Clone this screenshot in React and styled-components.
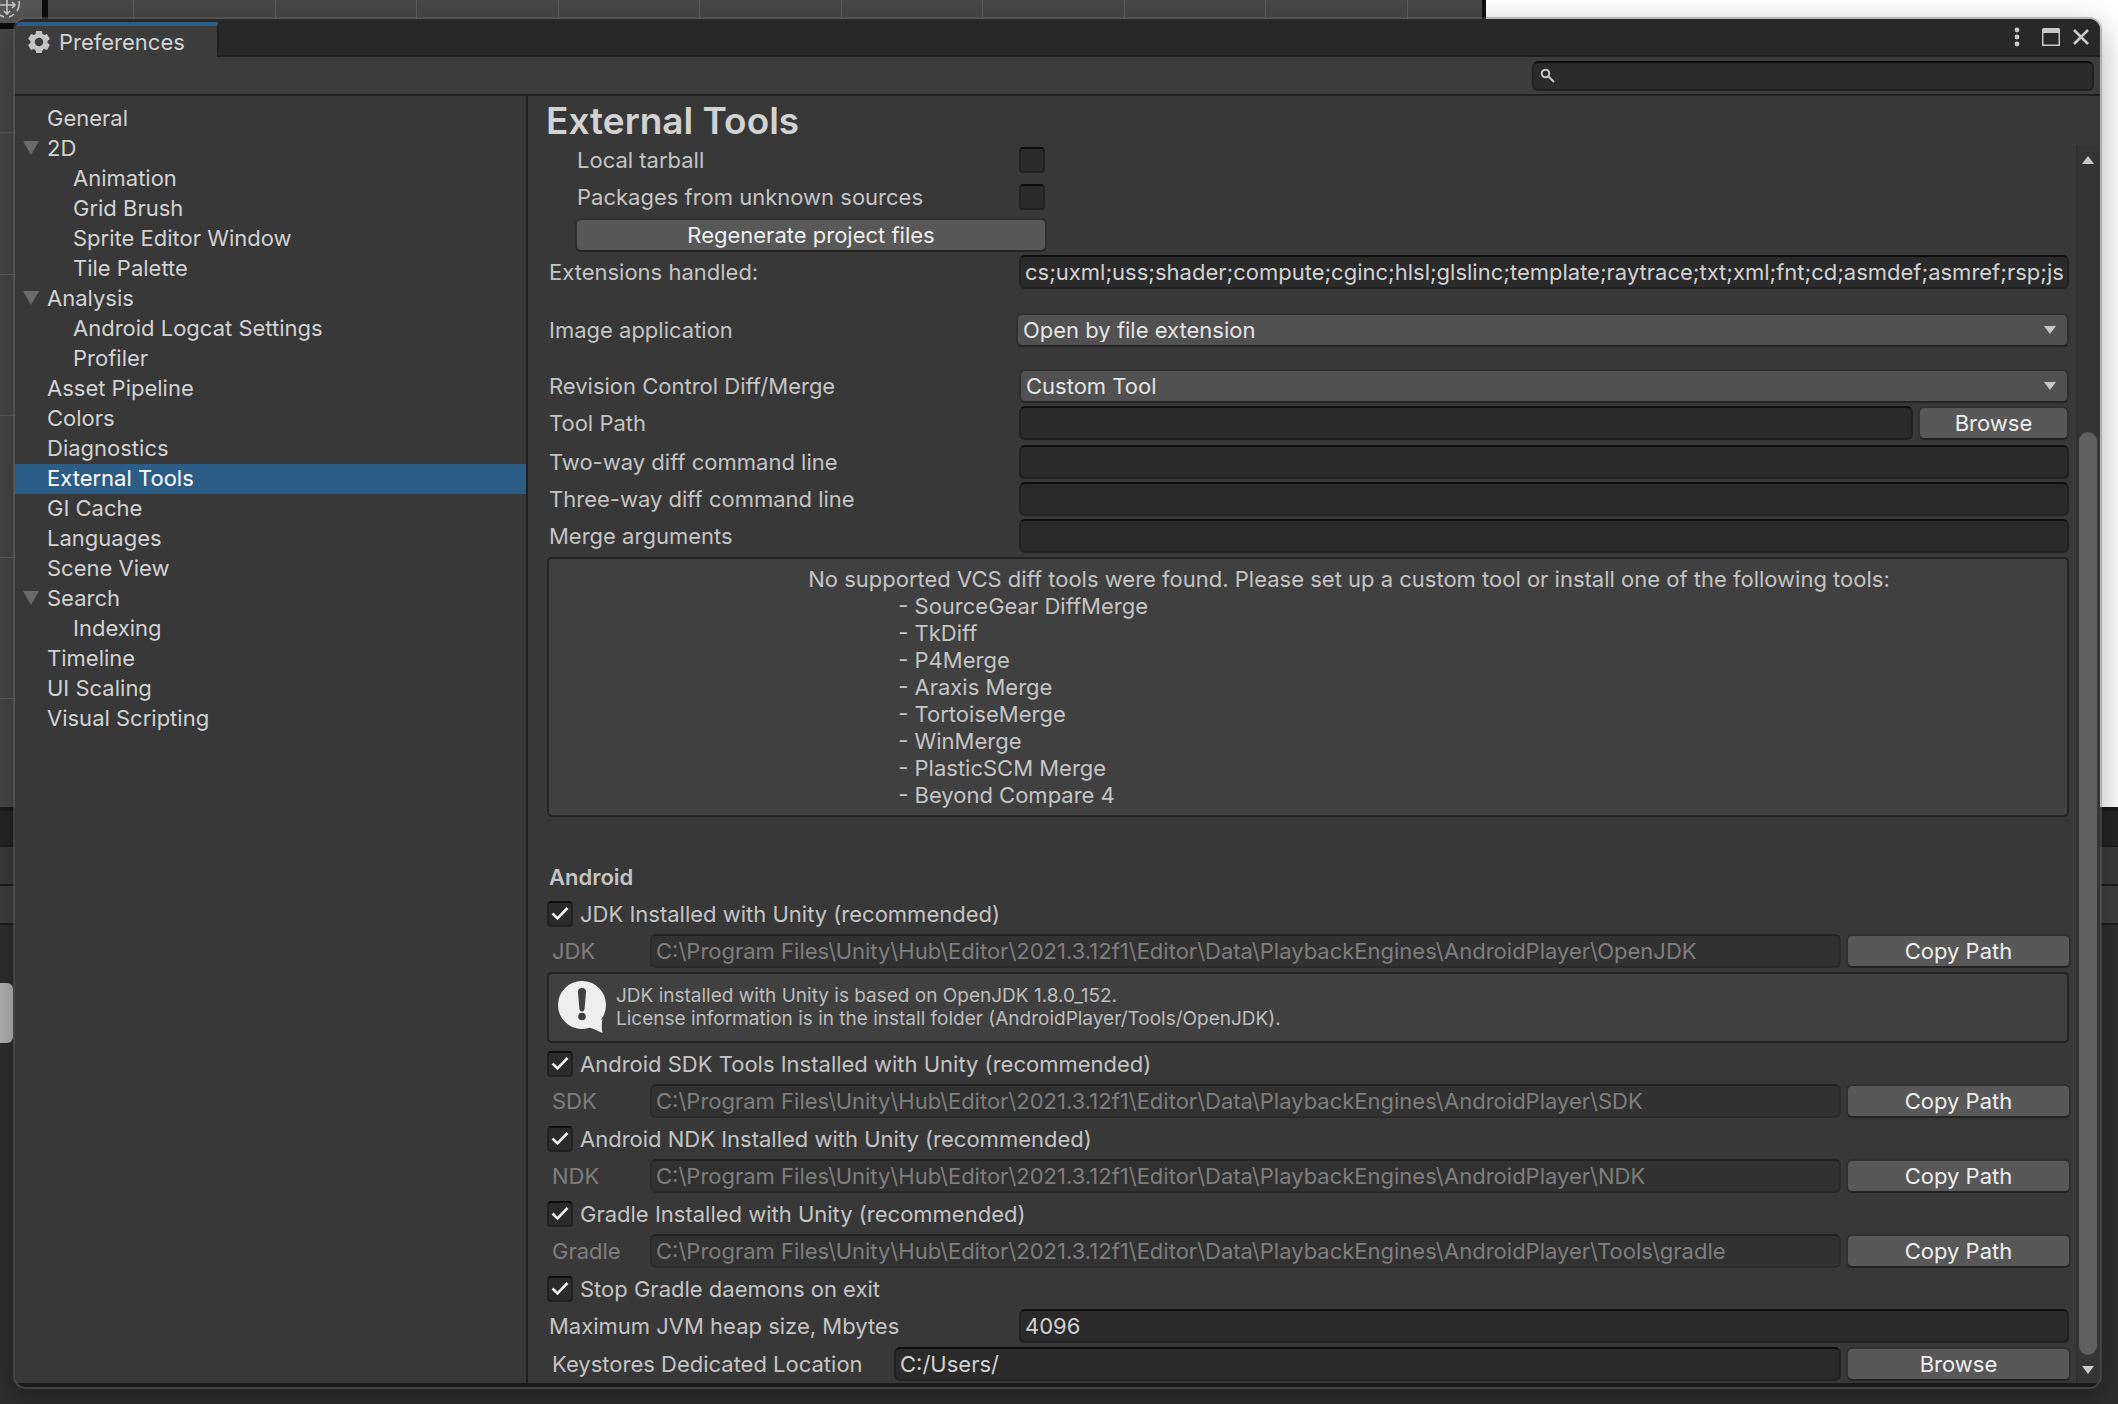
import React from "react";
import styled, { createGlobalStyle, css } from "styled-components";

const GlobalStyle = createGlobalStyle`
  *, *::before, *::after { box-sizing: border-box; }
  body {
    margin: 0;
    background: #2e2e2e;
    color: #c4c4c4;
    font: 400 22px/30px Inter, "Liberation Sans", sans-serif;
  }
  input, button, select { font: inherit; color: inherit; margin: 0; }
`;

/* ---------- editor behind the window ---------- */

const Desktop = styled.div`
  display: grid;
  min-height: 100vh;
  overflow: hidden;
`;

const Backdrop = styled.div`
  grid-area: 1 / 1;
  display: flex;
  flex-direction: column;
  background: #2e2e2e;
`;

const Scene = styled.div`
  display: flex;
  height: 807px;
`;

const Canvas = styled.div`
  flex: 0 1 1486px;
  border-right: 4px solid #111111;
  background-color: #474747;
  background-image:
    linear-gradient(90deg, #5c5c5c 1px, transparent 1px 142px, #5c5c5c 142px 143px, transparent 143px),
    linear-gradient(#5c5c5c 1px, transparent 1px 142px, #5c5c5c 142px 143px, transparent 143px);
  background-size: 283px 283px;
  background-position: 133px 132px;
`;

const GizmoBox = styled.div`
  width: 48px;
  height: 29px;
  border: solid #0d0d0d;
  border-width: 0 6px 6px 0;
  background: #565656;
  svg { display: block; }
`;

const GamePage = styled.div`
  flex: 1;
  background: #ffffff;
`;

const Bar = styled.div`
  height: ${(p) => p.$height}px;
  background: ${(p) => p.$color};
  border-bottom: 2px solid #1c1c1c;
`;

const Knob = styled.div`
  width: 13px;
  height: 60px;
  margin-top: 58px;
  border-radius: 0 6px 6px 0;
  background: #b4b4b4;
`;

/* ---------- window chrome ---------- */

const Window = styled.main`
  grid-area: 1 / 1;
  z-index: 1;
  display: flex;
  flex-direction: column;
  margin: 17px 16px 15px 13px;
  border: 2px solid rgba(102, 102, 102, 0.43);
  border-bottom-color: #434343;
  border-radius: 13px;
  background: #383838;
  background-clip: padding-box;
  box-shadow: 0 10px 32px rgba(0, 0, 0, 0.3);
  overflow: hidden;
`;

const TitleBar = styled.header`
  display: flex;
  align-items: stretch;
  height: 38px;
  background: #282828;
`;

const Tab = styled.h1`
  display: flex;
  align-items: center;
  gap: 9px;
  width: 204px;
  margin: 3px 0 0;
  padding-left: 13px;
  border-top: 4px solid #2c5d87;
  border-right: 2px solid #1f1f1f;
  border-radius: 6px 3px 0 0;
  background: #3c3c3c;
  color: #d2d2d2;
  font-size: 22px;
  font-weight: 400;
`;

const WindowButtons = styled.div`
  flex: 1;
  display: flex;
  justify-content: flex-end;
  align-items: center;
  gap: 12px;
  padding-right: 10px;
  border-bottom: 2px solid #202020;
`;

const IconButton = styled.button`
  display: flex;
  padding: 0;
  border: 0;
  background: none;
  color: #c8c8c8;
`;

const Toolbar = styled.div`
  display: flex;
  justify-content: flex-end;
  align-items: center;
  height: 39px;
  padding-right: 6px;
  border-bottom: 2px solid #202020;
  background: #3c3c3c;
`;

const SearchBox = styled.label`
  display: flex;
  align-items: center;
  width: 562px;
  height: 30px;
  padding-left: 6px;
  border: 2px solid #212121;
  border-top-color: #0d0d0d;
  border-radius: 6px;
  background: #2a2a2a;
  input {
    flex: 1;
    min-width: 0;
    height: 24px;
    border: 0;
    outline: 0;
    background: none;
  }
`;

const Body = styled.div`
  flex: 1;
  display: flex;
  border-bottom: 4px solid #191919;
`;

/* ---------- category tree ---------- */

const Sidebar = styled.nav`
  flex: 0 0 513px;
  padding-top: 8px;
  border-right: 2px solid #202020;
`;

const Tree = styled.ul`
  margin: 0;
  padding: 0;
  list-style: none;
`;

const TreeLink = styled.a`
  display: flex;
  align-items: center;
  height: 30px;
  padding: 0 0 2px ${(p) => (p.$child ? 58 : 8)}px;
  color: ${(p) => (p.$selected ? "#ffffff" : "#d2d2d2")};
  background: ${(p) => (p.$selected ? "#2c5d87" : "transparent")};
  text-decoration: none;
`;

const Fold = styled.svg`
  width: 16px;
  height: 14px;
  margin-right: 8px;
  fill: ${(p) => (p.$open ? "#6a6a6a" : "none")};
`;

/* ---------- settings panel ---------- */

const Panel = styled.section`
  flex: 1;
  min-width: 0;
  display: flex;
  flex-direction: column;
`;

const PanelTitle = styled.h2`
  margin: 0;
  padding: 3px 0 0 18px;
  color: #d2d2d2;
  font-size: 37px;
  font-weight: 600;
  line-height: 44px;
`;

const ScrollArea = styled.div`
  flex: 1;
  display: flex;
`;

const Settings = styled.div`
  flex: 1;
  min-width: 0;
  display: flex;
  flex-direction: column;
  gap: 4px;
  padding: 0 7px 2px 19px;
`;

const Group = styled.div`
  display: flex;
  flex-direction: column;
  gap: 3px;
  margin-top: ${(p) => p.$above || 0}px;
`;

const Row = styled.div`
  display: flex;
  align-items: center;
  height: 34px;
  padding-left: ${(p) => (p.$indent ? 28 : 0)}px;
`;

const PathRow = styled(Row)`
  gap: 5px;
  margin-right: -2px;
`;

const Label = styled.label`
  flex: 0 0 ${(p) => p.$width}px;
  padding-left: ${(p) => p.$inset || 2}px;
  color: ${(p) => (p.$dim ? "#7e7e7e" : "#c4c4c4")};
  white-space: nowrap;
`;

const fieldFrame = css`
  height: 34px;
  border: 2px solid #212121;
  border-radius: 6px;
`;

const TextField = styled.input`
  ${fieldFrame}
  flex: 1;
  min-width: 0;
  padding: 0 4px;
  border-top-color: #0d0d0d;
  outline: 0;
  background: #2a2a2a;
  color: #d2d2d2;
  &:disabled {
    border-color: #2a2a2a;
    border-top-color: #222222;
    background: #313131;
    color: #7e7e7e;
  }
`;

const Button = styled.button`
  ${fieldFrame}
  flex: 0 0 ${(p) => p.$width}px;
  padding: 0;
  border-color: #303030;
  border-bottom-color: #242424;
  background: #585858;
  background-clip: padding-box;
  color: #eeeeee;
`;

const SelectWrap = styled.span`
  flex: 1;
  min-width: 0;
  display: grid;
  align-items: center;
  svg {
    grid-area: 1 / 1;
    justify-self: end;
    margin-right: 13px;
    pointer-events: none;
  }
`;

const SelectBox = styled.select`
  ${fieldFrame}
  grid-area: 1 / 1;
  width: 100%;
  padding: 0 30px 3px 5px;
  border-color: #303030;
  border-bottom-color: #242424;
  appearance: none;
  background: #515151;
  background-clip: padding-box;
  color: #e4e4e4;
`;

const CheckWrap = styled.span`
  display: grid;
  place-items: center;
  svg {
    grid-area: 1 / 1;
    pointer-events: none;
  }
`;

const CheckInput = styled.input`
  grid-area: 1 / 1;
  width: 26px;
  height: 26px;
  border: 2px solid #212121;
  border-top-color: #0d0d0d;
  border-radius: 4px;
  appearance: none;
  background: #2a2a2a;
`;

const CheckLabel = styled.label`
  padding-left: 7px;
`;

const NoticeBox = styled.div`
  display: flex;
  justify-content: center;
  padding: 7px 0 6px 82px;
  border: 2px solid #232323;
  border-radius: 5px;
  background: #404040;
  line-height: 27px;
  p, ul { margin: 0; }
  ul {
    padding: 0 0 0 90px;
    list-style: none;
  }
`;

const InfoBox = styled.div`
  display: flex;
  align-items: center;
  gap: 10px;
  height: 71px;
  padding: 0 9px 2px;
  border: 2px solid #232323;
  border-radius: 5px;
  background: #404040;
  color: #bdbdbd;
  font-size: 19px;
  line-height: 23px;
  p { margin: 0; }
`;

const SectionTitle = styled.h3`
  margin: 0;
  padding-left: 2px;
  font-size: 22px;
  font-weight: 600;
  line-height: 34px;
`;

const ScrollBar = styled.div`
  display: flex;
  flex-direction: column;
  align-items: center;
  width: 24px;
  margin-top: 2px;
  padding: 11px 2px 9px 0;
  border-left: 2px solid #303030;
  background: #353535;
`;

const Thumb = styled.div`
  flex: 1;
  width: 18px;
  margin: 268px 0 11px;
  border-radius: 9px;
  background: #5f5f5f;
`;

/* ---------- drawings ---------- */

const GizmoIcon = () => (
  <svg width="24" height="22" viewBox="0 0 24 22" fill="none" stroke="#c4c4c4" strokeWidth="1.6">
    <path d="M7 0v14M0 5h15M4 11l3 3 3-3M12 2l3 3-3 3" />
    <path d="M19 1a13 13 0 0 1-2 10M14 14a13 13 0 0 1-5 3M4 17a13 13 0 0 1-4-2" />
  </svg>
);

const GearIcon = () => (
  <svg width="22" height="22" viewBox="0 0 22 22">
    <path
      fill="#c4c4c4"
      fillRule="evenodd"
      d="M8.2 0h5.600l.7 3.100 1.500.9L19 3l2.900 5-2.300 2.100v1.800l2.300 2.100-2.900 5-3-1-1.500.9-.7 3.100H8.200l-.7-3.100L6 18l-3 1-2.900-5 2.300-2.100v-1.800L.1 8 3 3l3 1 1.500-.9zM11 6.800a4.200 4.200 0 1 0 0 8.400 4.200 4.200 0 0 0 0-8.400z"
    />
  </svg>
);

const KebabIcon = () => (
  <svg width="26" height="20" viewBox="0 0 26 20" fill="currentColor">
    <circle cx="13" cy="3" r="2.400" />
    <circle cx="13" cy="10" r="2.400" />
    <circle cx="13" cy="17" r="2.400" />
  </svg>
);

const MaximizeIcon = () => (
  <svg width="18" height="18" viewBox="0 0 18 18" fill="currentColor">
    <path fillRule="evenodd" d="M1 0h16l1 1v17H0V1zM1.500 5v11.500h15V5z" />
  </svg>
);

const CloseIcon = () => (
  <svg width="18" height="18" viewBox="0 0 18 18" fill="none" stroke="currentColor" strokeWidth="2.600">
    <path d="M2 2l14 14M16 2L2 16" />
  </svg>
);

const SearchIcon = () => (
  <svg width="15" height="15" viewBox="0 0 15 15" fill="none" stroke="#c4c4c4" strokeWidth="2">
    <circle cx="5.500" cy="5.500" r="3.800" />
    <path d="M8.300 8.300L14 14" />
  </svg>
);

const CheckIcon = () => (
  <svg width="18" height="16" viewBox="0 0 18 16" fill="none" stroke="#eeeeee" strokeWidth="2.600">
    <path d="M1.500 7.500l5 5L16.500 2" />
  </svg>
);

const DownIcon = () => (
  <svg width="12" height="8" viewBox="0 0 12 8" fill="#c8c8c8">
    <path d="M0 0h12L6 8z" />
  </svg>
);

const UpIcon = () => (
  <svg width="12" height="8" viewBox="0 0 12 8" fill="#c8c8c8">
    <path d="M0 8h12L6 0z" />
  </svg>
);

const InfoIcon = () => (
  <svg width="48" height="52" viewBox="0 0 48 52">
    <circle cx="24" cy="24" r="24" fill="#eeeeee" />
    <path fill="#eeeeee" d="M30 46c5 1.500 10 4 14.500 6-.8-4-1-10 0-14z" />
    <path fill="#404040" d="M24 7c2.800 0 4.200 1.500 4 4.500L26.600 27.500c-.2 2-1 3-2.600 3s-2.400-1-2.600-3L20 11.500C19.800 8.500 21.200 7 24 7z" />
    <circle cx="24" cy="35.500" r="3.800" fill="#404040" />
  </svg>
);

/* ---------- data ---------- */

const categories = [
  { name: "General" },
  { name: "2D", children: ["Animation", "Grid Brush", "Sprite Editor Window", "Tile Palette"] },
  { name: "Analysis", children: ["Android Logcat Settings", "Profiler"] },
  { name: "Asset Pipeline" },
  { name: "Colors" },
  { name: "Diagnostics" },
  { name: "External Tools", selected: true },
  { name: "GI Cache" },
  { name: "Languages" },
  { name: "Scene View" },
  { name: "Search", children: ["Indexing"] },
  { name: "Timeline" },
  { name: "UI Scaling" },
  { name: "Visual Scripting" },
];

const diffTools = [
  "SourceGear DiffMerge",
  "TkDiff",
  "P4Merge",
  "Araxis Merge",
  "TortoiseMerge",
  "WinMerge",
  "PlasticSCM Merge",
  "Beyond Compare 4",
];

const playerRoot = "C:\\Program Files\\Unity\\Hub\\Editor\\2021.3.12f1\\Editor\\Data\\PlaybackEngines\\AndroidPlayer\\";

/* ---------- parts ---------- */

const Checkbox = ({ id, checked }) => (
  <CheckWrap>
    <CheckInput type="checkbox" id={id} defaultChecked={checked} />
    {checked && <CheckIcon />}
  </CheckWrap>
);

const CheckRow = ({ id, children }) => (
  <Row>
    <Checkbox id={id} checked />
    <CheckLabel htmlFor={id}>{children}</CheckLabel>
  </Row>
);

const ToggleRow = ({ id, label }) => (
  <Row $indent>
    <Label htmlFor={id} $width={444}>{label}</Label>
    <Checkbox id={id} />
  </Row>
);

const FieldRow = ({ id, label, value = "" }) => (
  <Row>
    <Label htmlFor={id} $width={472}>{label}</Label>
    <TextField id={id} defaultValue={value} />
  </Row>
);

const SelectRow = ({ id, label, option, labelWidth = 472 }) => (
  <Row>
    <Label htmlFor={id} $width={labelWidth}>{label}</Label>
    <SelectWrap>
      <SelectBox id={id}><option>{option}</option></SelectBox>
      <DownIcon />
    </SelectWrap>
  </Row>
);

const ToolGroup = ({ name, title, folder }) => {
  const key = name.toLowerCase();
  return (
    <Group>
      <CheckRow id={`${key}-bundled`}>{title} Installed with Unity (recommended)</CheckRow>
      <PathRow>
        <Label htmlFor={`${key}-path`} $width={98} $inset={5} $dim>{name}</Label>
        <TextField id={`${key}-path`} defaultValue={playerRoot + folder} disabled />
        <Button type="button" $width={225}>Copy Path</Button>
      </PathRow>
    </Group>
  );
};

const ToolPathRow = styled.div`
  display: flex;
  gap: 5px;
  & > :first-child { flex: 1; min-width: 0; }
`;

export default function App() {
  return (
    <>
      <GlobalStyle />
      <Desktop>
        <Backdrop aria-hidden="true">
          <Scene>
            <Canvas><GizmoBox><GizmoIcon /></GizmoBox></Canvas>
            <GamePage />
          </Scene>
          <Bar $height={4} $color="#1a1a1a" />
          <Bar $height={36} $color="#252525" />
          <Bar $height={39} $color="#3a3a3a" />
          <Bar $height={39} $color="#3f3f3f" />
          <Knob />
        </Backdrop>

        <Window>
          <TitleBar>
            <Tab><GearIcon />Preferences</Tab>
            <WindowButtons>
              <IconButton type="button" aria-label="Menu"><KebabIcon /></IconButton>
              <IconButton type="button" aria-label="Maximize"><MaximizeIcon /></IconButton>
              <IconButton type="button" aria-label="Close"><CloseIcon /></IconButton>
            </WindowButtons>
          </TitleBar>
          <Toolbar>
            <SearchBox><SearchIcon /><input type="text" aria-label="Search preferences" /></SearchBox>
          </Toolbar>

          <Body>
            <Sidebar>
              <Tree>
                {categories.map((c) => (
                  <li key={c.name}>
                    <TreeLink href="#" $selected={c.selected}>
                      <Fold viewBox="0 0 16 14" $open={!!c.children}><path d="M0 0h16L8 14z" /></Fold>
                      {c.name}
                    </TreeLink>
                    {c.children && (
                      <Tree>
                        {c.children.map((name) => (
                          <li key={name}><TreeLink href="#" $child>{name}</TreeLink></li>
                        ))}
                      </Tree>
                    )}
                  </li>
                ))}
              </Tree>
            </Sidebar>

            <Panel>
              <PanelTitle>External Tools</PanelTitle>
              <ScrollArea>
                <Settings>
                  <Group>
                    <ToggleRow id="local-tarball" label="Local tarball" />
                    <ToggleRow id="unknown-sources" label="Packages from unknown sources" />
                  </Group>
                  <Group>
                    <Row $indent><Button type="button" $width={472}>Regenerate project files</Button></Row>
                    <FieldRow
                      id="extensions"
                      label="Extensions handled:"
                      value="cs;uxml;uss;shader;compute;cginc;hlsl;glslinc;template;raytrace;txt;xml;fnt;cd;asmdef;asmref;rsp;json"
                    />
                  </Group>
                  <Group $above={20}>
                    <SelectRow id="image-app" label="Image application" option="Open by file extension" labelWidth={469} />
                  </Group>
                  <Group $above={18}>
                    <SelectRow id="diff-tool" label="Revision Control Diff/Merge" option="Custom Tool" />
                    <ToolPathRow>
                      <FieldRow id="tool-path" label="Tool Path" />
                      <Button type="button" $width={151}>Browse</Button>
                    </ToolPathRow>
                  </Group>
                  <Group $above={1}>
                    <FieldRow id="two-way" label="Two-way diff command line" />
                    <FieldRow id="three-way" label="Three-way diff command line" />
                    <FieldRow id="merge-args" label="Merge arguments" />
                  </Group>
                  <NoticeBox>
                    <div>
                      <p>No supported VCS diff tools were found. Please set up a custom tool or install one of the following tools:</p>
                      <ul>{diffTools.map((t) => <li key={t}>- {t}</li>)}</ul>
                    </div>
                  </NoticeBox>

                  <Group $above={39}>
                    <SectionTitle>Android</SectionTitle>
                    <ToolGroup name="JDK" title="JDK" folder="OpenJDK" />
                  </Group>
                  <InfoBox>
                    <InfoIcon />
                    <p>
                      JDK installed with Unity is based on OpenJDK 1.8.0_152.<br />
                      License information is in the install folder (AndroidPlayer/Tools/OpenJDK).
                    </p>
                  </InfoBox>
                  <ToolGroup name="SDK" title="Android SDK Tools" folder="SDK" />
                  <ToolGroup name="NDK" title="Android NDK" folder="NDK" />
                  <ToolGroup name="Gradle" title="Gradle" folder="Tools\gradle" />
                  <Group>
                    <CheckRow id="stop-daemons">Stop Gradle daemons on exit</CheckRow>
                    <FieldRow id="heap-size" label="Maximum JVM heap size, Mbytes" value="4096" />
                  </Group>
                  <PathRow>
                    <Label htmlFor="keystores" $width={342} $inset={5}>Keystores Dedicated Location</Label>
                    <TextField id="keystores" defaultValue="C:/Users/" />
                    <Button type="button" $width={225}>Browse</Button>
                  </PathRow>
                </Settings>
                <ScrollBar><UpIcon /><Thumb /><DownIcon /></ScrollBar>
              </ScrollArea>
            </Panel>
          </Body>
        </Window>
      </Desktop>
    </>
  );
}
